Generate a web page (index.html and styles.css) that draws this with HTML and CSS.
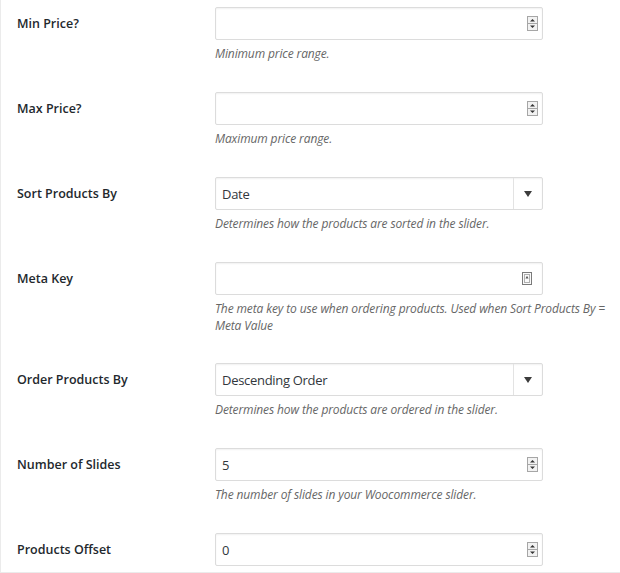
FILE: index.html
```html
<!DOCTYPE html>
<html lang="en">
<head>
  <meta charset="UTF-8">
  <title>Slider Settings</title>
  <link rel="stylesheet" href="styles.css">
</head>
<body>
  <div class="settings">

    <div class="row">
      <div class="label">Min Price?</div>
      <div class="field">
        <div class="box">
          <span class="value"></span>
          <svg class="spin" width="11" height="15" viewBox="0 0 11 15"><rect x="0.5" y="0.5" width="10" height="14" fill="#f2f2f2" stroke="#a6a6a6"/><line x1="0" y1="7.5" x2="11" y2="7.5" stroke="#a6a6a6"/><path d="M3 5.5L5.5 3L8 5.5Z" fill="#333"/><path d="M3 9.5L5.5 12L8 9.5Z" fill="#333"/></svg>
        </div>
        <p class="desc">Minimum price range.</p>
      </div>
    </div>

    <div class="row">
      <div class="label">Max Price?</div>
      <div class="field">
        <div class="box">
          <span class="value"></span>
          <svg class="spin" width="11" height="15" viewBox="0 0 11 15"><rect x="0.5" y="0.5" width="10" height="14" fill="#f2f2f2" stroke="#a6a6a6"/><line x1="0" y1="7.5" x2="11" y2="7.5" stroke="#a6a6a6"/><path d="M3 5.5L5.5 3L8 5.5Z" fill="#333"/><path d="M3 9.5L5.5 12L8 9.5Z" fill="#333"/></svg>
        </div>
        <p class="desc">Maximum price range.</p>
      </div>
    </div>

    <div class="row">
      <div class="label">Sort Products By</div>
      <div class="field">
        <div class="box select">
          <span class="value">Date</span>
          <span class="arrow"><svg width="8" height="6" viewBox="0 0 8 6"><path d="M0 0H8L4 6Z" fill="#3c3c3c"/></svg></span>
        </div>
        <p class="desc">Determines how the products are sorted in the slider.</p>
      </div>
    </div>

    <div class="row meta">
      <div class="label">Meta Key</div>
      <div class="field">
        <div class="box">
          <span class="value"></span>
          <svg class="key" width="10" height="13" viewBox="0 0 10 13"><rect x="0.5" y="0.5" width="9" height="12" fill="#fafafa" stroke="#7a7a7a"/><rect x="2.5" y="2.5" width="5" height="8" fill="none" stroke="#b0b0b0"/><path d="M3.5 6.5L5 3.8L6.5 6.5Z" fill="#555"/></svg>
        </div>
        <p class="desc">The meta key to use when ordering products. Used when Sort Products By = Meta Value</p>
      </div>
    </div>

    <div class="row">
      <div class="label">Order Products By</div>
      <div class="field">
        <div class="box select">
          <span class="value">Descending Order</span>
          <span class="arrow"><svg width="8" height="6" viewBox="0 0 8 6"><path d="M0 0H8L4 6Z" fill="#3c3c3c"/></svg></span>
        </div>
        <p class="desc">Determines how the products are ordered in the slider.</p>
      </div>
    </div>

    <div class="row">
      <div class="label">Number of Slides</div>
      <div class="field">
        <div class="box">
          <span class="value">5</span>
          <svg class="spin" width="11" height="15" viewBox="0 0 11 15"><rect x="0.5" y="0.5" width="10" height="14" fill="#f2f2f2" stroke="#a6a6a6"/><line x1="0" y1="7.5" x2="11" y2="7.5" stroke="#a6a6a6"/><path d="M3 5.5L5.5 3L8 5.5Z" fill="#333"/><path d="M3 9.5L5.5 12L8 9.5Z" fill="#333"/></svg>
        </div>
        <p class="desc">The number of slides in your Woocommerce slider.</p>
      </div>
    </div>

    <div class="row">
      <div class="label">Products Offset</div>
      <div class="field">
        <div class="box">
          <span class="value">0</span>
          <svg class="spin" width="11" height="15" viewBox="0 0 11 15"><rect x="0.5" y="0.5" width="10" height="14" fill="#f2f2f2" stroke="#a6a6a6"/><line x1="0" y1="7.5" x2="11" y2="7.5" stroke="#a6a6a6"/><path d="M3 5.5L5.5 3L8 5.5Z" fill="#333"/><path d="M3 9.5L5.5 12L8 9.5Z" fill="#333"/></svg>
        </div>
      </div>
    </div>

  </div>
</body>
</html>
```

FILE: styles.css
```css
body {
  margin: 0;
  background: #fff;
  font-family: "Open Sans", "Noto Sans", sans-serif;
  color: #23282d;
}
.settings {
  height: 573px;
  box-sizing: border-box;
  padding-top: 7px;
  border-left: 1px solid #ebebeb;
  border-bottom: 1px solid #ebebeb;
  overflow: hidden;
}
.row {
  display: flex;
  margin-bottom: 30px;
}
.row.meta {
  margin-bottom: 29px;
}
.label {
  width: 214px;
  box-sizing: border-box;
  padding-left: 16px;
  line-height: 33px;
  height: 33px;
  font-size: 12.5px;
  font-weight: 600;
}
.field {
  width: 328px;
}
.box {
  height: 33px;
  box-sizing: border-box;
  border: 1px solid #dcdcdc;
  border-radius: 2px;
  box-shadow: inset 0 1px 2px rgba(0, 0, 0, 0.06);
  display: flex;
  align-items: center;
  padding-left: 6px;
  font-size: 13px;
  letter-spacing: -0.3px;
  color: #32373c;
}
.value {
  flex: 1;
}
.spin {
  margin-right: 4px;
}
.key {
  margin-right: 10px;
}
.select .arrow {
  width: 28px;
  height: 100%;
  border-left: 1px solid #e3e3e3;
  display: flex;
  align-items: center;
  justify-content: center;
}
.desc {
  margin: 5px 0 0;
  font-size: 12px;
  line-height: 17px;
  letter-spacing: -0.12px;
  font-style: italic;
  color: #666;
  width: 410px;
}
```
